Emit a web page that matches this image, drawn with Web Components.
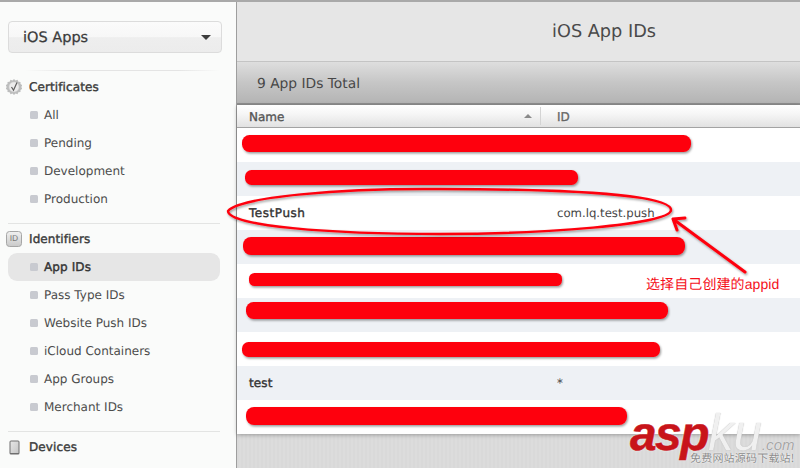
<!DOCTYPE html>
<html><head><meta charset="utf-8"><title>iOS App IDs</title>
<style>
html,body{margin:0;padding:0;width:800px;height:468px;overflow:hidden;font-family:"DejaVu Sans",sans-serif;color:#444;text-rendering:geometricPrecision}
</style></head><body>
<ios-app>
  <side-nav slot="side">
    <select-box>iOS Apps</select-box>
    <nav-section label="Certificates" icon="cert" fade>
      <nav-item>All</nav-item><nav-item>Pending</nav-item><nav-item>Development</nav-item><nav-item>Production</nav-item>
    </nav-section>
    <nav-section label="Identifiers" icon="id">
      <nav-item active>App IDs</nav-item><nav-item>Pass Type IDs</nav-item><nav-item>Website Push IDs</nav-item><nav-item>iCloud Containers</nav-item><nav-item>App Groups</nav-item><nav-item>Merchant IDs</nav-item>
    </nav-section>
    <nav-section label="Devices" icon="device"></nav-section>
  </side-nav>
  <page-head slot="main">iOS App IDs</page-head>
  <total-bar slot="main">9 App IDs Total</total-bar>
  <id-table slot="main">
    <id-row></id-row>
    <id-row alt></id-row>
    <id-row name="TestPush" ident="com.lq.test.push" wide></id-row>
    <id-row alt></id-row>
    <id-row></id-row>
    <id-row alt></id-row>
    <id-row></id-row>
    <id-row alt name="test" ident="*"></id-row>
    <id-row></id-row>
  </id-table>
  <mark-up slot="over"></mark-up>
  <site-mark slot="over"></site-mark>
</ios-app>
<script>
function def(name, html){
  customElements.define(name, class extends HTMLElement{
    connectedCallback(){
      if(this.shadowRoot) return;
      const r=this.attachShadow({mode:'open'});
      r.innerHTML = typeof html==='function'? html(this):html;
    }
  });
}
def('ios-app',`<style>
:host{display:block;position:relative;width:800px;height:468px;overflow:hidden;background:#d9d9d9}
.wrap{display:flex;height:466px;border-top:2px solid #a9a9a9}
.side{display:block;width:236px;flex:none;background:#fafbfa;border-right:1px solid #9e9e9e}
.main{flex:1;display:flex;flex-direction:column;min-width:0;
 background:repeating-linear-gradient(90deg,#d9d9d9 0 2px,#dcdcdc 2px 4px)}
</style><div class="wrap"><div class="side"><slot name="side"></slot></div><div class="main"><slot name="main"></slot></div></div><slot name="over"></slot>`);
def('side-nav',`<style>:host{display:block;padding-top:19px}</style><slot></slot>`);
def('select-box',`<style>
:host{display:flex;align-items:center;justify-content:space-between;box-sizing:border-box;margin-left:8px;width:214px;height:32px;padding:0 10px 0 14px;border:1px solid #dcdcdc;border-radius:4px;
background:linear-gradient(#fbfbfb 0,#f7f7f7 50%,#eeeeee 52%,#ececec 100%);font:14.500px "DejaVu Sans",sans-serif;color:#3a3a3a;-webkit-text-stroke:.25px #3a3a3a}
span{padding-top:2px}
i{width:0;height:0;border:5px solid transparent;border-top:5px solid #3c3c3c;border-bottom:0}
</style><span><slot></slot></span><i></i>`);
const icons={
cert:`<svg width="16" height="16" viewBox="0 0 16 16"><path d="M8 0l1.500 1.500 2-.7.9 1.900 2.100.2v2.100l1.800 1.100-1 1.900 1 1.900-1.800 1.100v2.100l-2.100.2-.9 1.900-2-.7L8 16l-1.500-1.500-2 .7-.9-1.900-2.100-.2v-2.100L-.3 9.900l1-1.900-1-1.900L1.500 5V2.900l2.100-.2.9-1.900 2 .7z" fill="#bcbdbd"/><circle cx="8" cy="8" r="5" fill="#ececec" stroke="#d0d0d0" stroke-width=".5"/><path d="M5.500 8l2 3.200L11 3.400" fill="none" stroke="#5e5e5e" stroke-width="1.200"/></svg>`,
id:`<svg width="16" height="16" viewBox="0 0 16 16"><defs><linearGradient id="g" x1="0" y1="0" x2="0" y2="1"><stop offset="0" stop-color="#f1f1f1"/><stop offset="1" stop-color="#c9c9c9"/></linearGradient></defs><rect x=".5" y=".5" width="15" height="15" rx="3" fill="url(#g)" stroke="#a6a6a6"/></svg><b>ID</b>`,
device:`<svg width="11" height="15" viewBox="0 0 11 15"><defs><linearGradient id="h" x1="0" y1="0" x2="1" y2="1"><stop offset="0" stop-color="#e6e6e6"/><stop offset="1" stop-color="#c6c6c6"/></linearGradient></defs><rect x=".5" y=".5" width="10" height="14" rx="1.500" fill="#6f6f6f"/><rect x="1.500" y="1.500" width="8" height="11.500" fill="url(#h)"/></svg>`};
def('nav-section',el=>`<style>
:host{display:block;position:relative}
:host([fade]) .rule{background:linear-gradient(90deg,transparent 8%,#e4e4e4 30%,#e4e4e4 80%,transparent)}
.rule{height:1px;background:#e3e4e3;margin:0 16px 1px 8px}
:host([icon=id]) .rule{margin-top:10px}
:host([icon=device]) .rule{margin-top:10px}
:host([icon=cert]) .rule{margin-top:17px;margin-bottom:2px}
.h{display:flex;align-items:center;height:28px;font:12px "DejaVu Sans",sans-serif;color:#3b3b3b;-webkit-text-stroke:.4px #3b3b3b;letter-spacing:.1px}
.ic{position:relative;width:29px;flex:none;padding-left:6px;box-sizing:border-box;display:flex;height:16px;align-items:center}
:host([icon=device]) .ic{padding-left:9px}
b{position:absolute;left:6px;top:0;width:16px;text-align:center;font:8px/16px "DejaVu Sans",sans-serif;color:#777;-webkit-text-stroke:0;letter-spacing:0}
</style><div class="rule"></div><div class="h"><span class="ic">${icons[el.getAttribute('icon')]}</span><span>${el.getAttribute('label')}</span></div><slot></slot>`);
def('nav-item',`<style>
:host{display:flex;align-items:center;box-sizing:border-box;height:28px;margin:0 16px 0 8px;padding-left:22px;border-radius:9px;font:12px "DejaVu Sans",sans-serif;color:#4c4c4c}
:host([active]){background:#e6e6e6;color:#333;-webkit-text-stroke:.4px #333;letter-spacing:.1px}
i{width:8px;height:8px;border-radius:1.500px;background:#c8cad0;margin-right:6px;flex:none}
</style><i></i><slot></slot>`);
def('page-head',`<style>
:host{display:flex;align-items:center;justify-content:flex-end;box-sizing:border-box;height:60px;padding:0 144px 0 0;background:#e6e6e6;border-bottom:1px solid #c4c4c4;font:17.700px "DejaVu Sans",sans-serif;color:#4a4a4a}
</style><slot></slot>`);
def('total-bar',`<style>
:host{display:flex;align-items:center;box-sizing:border-box;height:43px;padding:3px 0 0 20px;background:linear-gradient(#dedede 0,#c6c6c6 50%,#b4b4b4 100%);border-bottom:2px solid #8f8f8f;font:13.800px "DejaVu Sans",sans-serif;color:#474747}
</style><slot></slot>`);
def('id-table',`<style>
:host{display:block;background:#fff;box-shadow:0 1px 4px rgba(0,0,0,.3)}
.head{display:grid;grid-template-columns:304px 1fr;box-sizing:border-box;height:23px;background:linear-gradient(#fff 0,#f6f6f6 40%,#e2e2e2 100%);border-bottom:1px solid #a3a3a3;font:12px "DejaVu Sans",sans-serif;color:#555;-webkit-text-stroke:.35px #555;align-items:center}
.n{position:relative;display:flex;align-items:center;height:18px;padding-left:12px;border-right:1px solid #d4d4d4;justify-content:space-between;padding-right:8px}
.n span{padding-top:1px}
.n i{width:0;height:0;border:4px solid transparent;border-bottom:4px solid #8a8a8a;border-top:0}
.d{padding:1px 0 0 16px;color:#666;-webkit-text-stroke:.3px #666}
</style><div class="head"><div class="n"><span>Name</span><i></i></div><div class="d">ID</div></div><slot></slot>`);
def('id-row',el=>`<style>
:host{display:grid;grid-template-columns:308px 1fr;align-items:center;height:34px;padding-left:12px;background:#fff;font:11.700px "DejaVu Sans",sans-serif;color:#444}
:host([alt]){background:#eef1f5}
.a{color:#333;-webkit-text-stroke:.4px #333;letter-spacing:.1px;font-size:12px}
:host([wide]) .a{letter-spacing:.55px}
</style><span class="a">${el.getAttribute('name')||''}</span><span>${el.getAttribute('ident')||''}</span>`);
const bars=[[242,135,449,17],[245,170,333,15],[243,237,442,18],[249,273,313,13],[246,302,422,17],[242,342,418,15],[246,407,381,18]];
def('mark-up',`<style>
:host{position:absolute;left:0;top:0;width:800px;height:468px;display:block}
svg{display:block}
.t{position:absolute;left:646px;top:275px;font:14px "Liberation Sans","Noto Sans CJK SC",sans-serif;letter-spacing:.1px;color:#f5101a;white-space:nowrap;line-height:18px}
</style><svg width="800" height="468" viewBox="0 0 800 468">
<defs><filter id="s" x="-5%" y="-40%" width="110%" height="200%"><feDropShadow dx="1" dy="1.500" stdDeviation="1" flood-color="#000" flood-opacity=".4"/></filter></defs>
<g fill="#fe000e" filter="url(#s)">${bars.map(b=>`<rect x="${b[0]}" y="${b[1]}" width="${b[2]}" height="${b[3]}" rx="${b[3]/2-1}"/>`).join('')}</g>
<g fill="none" stroke="#fe000e" stroke-width="2.500" filter="url(#s)" stroke-linecap="round" stroke-linejoin="round">
<path d="M228 211C240 197 340 188 440 189C560 189 671 194 671 210C671 225 540 234 440 234C330 234 228 226 228 211Z"/>
<path d="M745 272L673 219M673 219L685 218M673 219L677 230" stroke-width="3"/>
</g></svg><span class="t">选择自己创建的appid</span>`);
def('site-mark',`<style>
:host{position:absolute;left:630px;top:409px;width:170px;height:59px;display:block;font-family:"Liberation Sans",sans-serif;font-style:italic}
.l{display:flex;align-items:baseline;position:absolute;left:0;top:0;line-height:48px;white-space:nowrap}
.a{font-size:48px;font-weight:bold;letter-spacing:-1.600px;color:#c8141a;-webkit-text-stroke:.5px #c8141a;text-shadow:0 0 2px #fff}
.k{font-size:51px;color:#f0f0f0;text-shadow:0 0 1px #aaa}
.c{font-size:15px;letter-spacing:.1px;color:#a6a6a6;text-shadow:0 0 1px #fff}
.z{position:absolute;left:60px;top:42px;font:normal 11px/14px "Noto Sans CJK SC",sans-serif;color:#8a8a8a;white-space:nowrap;text-shadow:0 0 2px #fff,0 0 1px #fff;letter-spacing:.2px}
</style><div class="l"><span class="a">asp</span><span class="k">ku</span><span class="c">.com</span></div><div class="z">免费网站源码下载站!</div>`);
</script>
</body></html>
